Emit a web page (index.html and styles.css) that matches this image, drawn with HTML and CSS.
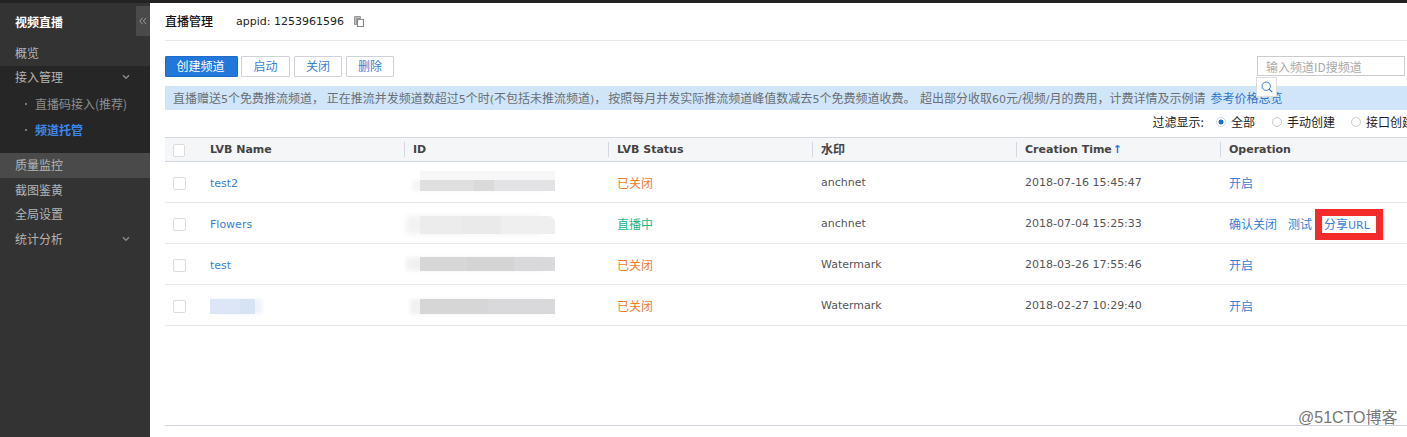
FILE: index.html
```html
<!DOCTYPE html>
<html lang="zh">
<head>
<meta charset="utf-8">
<title>直播管理</title>
<link rel="stylesheet" href="styles.css">
</head>
<body>
<div class="topstrip"></div>
<div class="app">
  <aside class="side">
    <div class="side-title">视频直播</div>
    <button class="collapse" aria-label="收起">
      <svg width="8" height="8" viewBox="0 0 8 8"><path d="M3.6 .8 .8 4l2.8 3.2M7.2 .8 4.4 4l2.8 3.2" fill="none" stroke="#9a9a9a" stroke-width="1"/></svg>
    </button>
    <div class="nav-item">概览</div>
    <div class="nav-group">
      <div class="nav-item nav-head">接入管理
        <svg class="chev" width="8" height="6" viewBox="0 0 8 6"><path d="M1 1.2 4 4.2l3-3" fill="none" stroke="#8a8a8a" stroke-width="1.4"/></svg>
      </div>
      <div class="sub-item">直播码接入(推荐)</div>
      <div class="sub-item sub-active">频道托管</div>
    </div>
    <div class="nav-item nav-active">质量监控</div>
    <div class="nav-item">截图鉴黄</div>
    <div class="nav-item">全局设置</div>
    <div class="nav-item">统计分析
      <svg class="chev" width="8" height="6" viewBox="0 0 8 6"><path d="M1 1.2 4 4.2l3-3" fill="none" stroke="#8a8a8a" stroke-width="1.4"/></svg>
    </div>
  </aside>
  <main class="main">
    <header class="page-head">
      <span class="page-title">直播管理</span>
      <span class="appid">appid: 1253961596</span>
      <svg class="copy" width="10" height="11" viewBox="0 0 10 11"><path d="M.5.5h6v2h-4v6h-2z" fill="#bbb" stroke="#999" stroke-width="1"/><path d="M3.5 3.5h6v7h-6z" fill="#fff" stroke="#888" stroke-width="1.2"/></svg>
    </header>
    <div class="toolbar">
      <button class="btn btn-primary">创建频道</button>
      <button class="btn btn-start">启动</button>
      <button class="btn">关闭</button>
      <button class="btn">删除</button>
      <div class="search">
        <input class="search-input" placeholder="输入频道ID搜频道">
        <button class="search-btn" aria-label="搜索">
          <svg width="12" height="12" viewBox="0 0 12 12"><circle cx="5.2" cy="5.2" r="4.2" fill="none" stroke="#3a7fd5" stroke-width="1"/><path d="m8.2 8.2 3 3" stroke="#3a7fd5" stroke-width="1.2"/></svg>
        </button>
      </div>
    </div>
    <div class="notice">直播赠送<span class="latin">5</span>个免费推流频道， 正在推流并发频道数超过<span class="latin">5</span>个时<span class="latin">(</span>不包括未推流频道<span class="latin">)</span>，<span class="gap"></span>按照每月并发实际推流频道峰值数减去<span class="latin">5</span>个免费频道收费。 <span class="gap"></span>超出部分收取<span class="latin">60</span>元<span class="latin">/</span>视频<span class="latin">/</span>月的费用，计费详情及示例请<a class="notice-link">参考价格总览</a></div>
    <div class="filter">
      <span class="filter-label">过滤显示:</span>
      <label class="radio-item"><i class="radio radio-on"></i>全部</label>
      <label class="radio-item"><i class="radio"></i>手动创建</label>
      <label class="radio-item"><i class="radio"></i>接口创建</label>
    </div>
    <table class="grid">
      <colgroup>
        <col class="c-check"><col class="c-name"><col class="c-w"><col class="c-w"><col class="c-w"><col class="c-w"><col class="c-op">
      </colgroup>
      <thead>
        <tr>
          <th><i class="check check-head"></i></th>
          <th class="first">LVB Name</th>
          <th>ID</th>
          <th>LVB Status</th>
          <th class="cjk-head">水印</th>
          <th>Creation Time<span class="sort">↑</span></th>
          <th>Operation</th>
        </tr>
      </thead>
      <tbody>
        <tr>
          <td><i class="check"></i></td>
          <td><a class="link latin">test2</a></td>
          <td><div class="mask mask-a"></div></td>
          <td class="st-off">已关闭</td>
          <td class="latin">anchnet</td>
          <td class="latin">2018-07-16 15:45:47</td>
          <td><a class="link">开启</a></td>
        </tr>
        <tr>
          <td><i class="check"></i></td>
          <td><a class="link latin">Flowers</a></td>
          <td><div class="mask mask-b"></div></td>
          <td class="st-on">直播中</td>
          <td class="latin">anchnet</td>
          <td class="latin">2018-07-04 15:25:33</td>
          <td><div class="ops"><a class="link">确认关闭</a><a class="link">测试</a><a class="link share">分享<span class="latin">URL</span></a></div></td>
        </tr>
        <tr>
          <td><i class="check"></i></td>
          <td><a class="link latin">test</a></td>
          <td><div class="mask mask-c"></div></td>
          <td class="st-off">已关闭</td>
          <td class="latin">Watermark</td>
          <td class="latin">2018-03-26 17:55:46</td>
          <td><a class="link">开启</a></td>
        </tr>
        <tr>
          <td><i class="check"></i></td>
          <td><div class="mask-name"></div></td>
          <td><div class="mask mask-d"></div></td>
          <td class="st-off">已关闭</td>
          <td class="latin">Watermark</td>
          <td class="latin">2018-02-27 10:29:40</td>
          <td><a class="link">开启</a></td>
        </tr>
      </tbody>
    </table>
    <div class="foot-line"></div>
  </main>
</div>
<div class="stamp">@51CTO博客</div>
</body>
</html>
```
FILE: styles.css
```css
* { box-sizing: border-box; }
html, body { margin: 0; padding: 0; height: 100%; overflow: hidden; background: #fff; }
body { font: 12px/1.2 "Noto Sans CJK SC", "Noto Sans", sans-serif; color: #333; position: relative; }
.latin { font-family: "DejaVu Sans", "Noto Sans CJK SC", sans-serif; font-size: 11px; }

.topstrip { height: 3px; background: #222; }
.app { display: flex; height: 434px; }

.side { width: 150px; flex: none; background: #333; color: #b4b4b4; position: relative; }
.side-title { height: 38px; padding: 0 15px; display: flex; align-items: center; color: #fff; font-weight: 700; }
.collapse { position: absolute; left: 136px; top: 3px; width: 14px; height: 30px; padding: 0; border: 0; background: #4a4a4a; display: flex; align-items: center; justify-content: center; }
.nav-item { height: 24.6px; padding: 0 15px; display: flex; align-items: center; justify-content: space-between; }
.nav-group { background: #262626; height: 87px; }
.nav-head { height: 25.6px; padding-bottom: 2px; }
.nav-active { background: #4a4a4a; height: 25px; }
.sub-item { height: 26px; padding-left: 35px; display: flex; align-items: center; position: relative; color: #8d8d8d; }
.sub-item::before { content: ""; position: absolute; left: 25px; top: 12px; width: 2px; height: 2px; background: #777; }
.sub-active { color: #3c86f0; font-weight: 700; }
.chev { margin-right: 5px; }

.main { flex: 1; min-width: 0; overflow: hidden; padding-left: 15px; }
.page-head { height: 38px; display: flex; align-items: center; border-bottom: 1px solid #e8e8e8; color: #111; }
.page-title { font-weight: 500; }
.appid { font-family: "DejaVu Sans", sans-serif; font-size: 11px; margin-left: 23px; color: #222; }
.copy { margin-left: 10px; }

.toolbar { display: flex; gap: 4px; margin-top: 15px; height: 21px; padding-right: 2px; }
.btn { width: 48px; height: 21px; padding: 0; border: 1px solid #cfd2d6; border-radius: 1px; background: #fff; color: #3a7fd5; font: inherit; }
.btn-primary { width: 73px; padding-right: 2px; background: #2277da; border-color: #1f6cc6; color: #fff; }
.btn-start { width: 49px; margin-left: -1px; }
.search { margin-left: auto; width: 148px; position: relative; }
.search-input { display: block; width: 100%; height: 20px; padding: 0 8px; border: 1px solid #ccc; background: #fff; font: inherit; outline: 0; }
.search-input::placeholder { color: #aaa; }
.search-btn { position: absolute; left: -1px; top: 21px; width: 21px; height: 20px; padding: 0; border: 1px solid #ddd; background: #fff; display: flex; align-items: center; justify-content: center; z-index: 1; }

.notice { height: 24px; margin-top: 9px; padding-left: 8px; line-height: 24px; background: #d0e5f7; color: #6a6f76; white-space: nowrap; }
.gap { display: inline-block; width: 2px; }
.notice-link { margin-left: 5px; color: #2f74c8; }

.filter { height: 27px; margin-right: -7px; padding-bottom: 3px; display: flex; align-items: center; justify-content: flex-end; color: #222; white-space: nowrap; }
.filter-label { margin-right: 7px; }
.radio-item { display: flex; align-items: center; margin-left: 5px; }
.radio-item + .radio-item { margin-left: 17px; }
.radio-item:last-child { margin-left: 16px; }
.radio { width: 10px; height: 10px; margin-right: 5px; border: 1px solid #ccc; border-radius: 50%; background: #fff; }
.radio-on { border-color: #cfd8e0; background: radial-gradient(circle, #1b6fd0 0 2.2px, #fff 2.8px); }

.grid { width: 1242px; table-layout: fixed; border-collapse: collapse; }
.c-check { width: 37px; }
.c-name { width: 202px; }
.c-w { width: 204px; }
.c-op { width: 187px; }
.grid th { height: 24px; padding: 0 0 1px 9px; position: relative; text-align: left; background: #f5f6f8; border-top: 1px solid #d3d7e0; border-bottom: 1px solid #d3d7e0; font: 700 11px "DejaVu Sans", "Noto Sans CJK SC", sans-serif; color: #444; white-space: nowrap; }
.grid th:nth-child(-n+2) { padding-left: 8px; }
.grid th + th + th::before { content: ""; position: absolute; left: 0; top: 4px; width: 1px; height: 15px; background: #d3d7e0; }
.grid th.cjk-head { font-size: 12px; padding-bottom: 3px; }
.sort { color: #2277da; margin-left: 1px; }
.grid td { height: 41px; padding: 2px 0 0 9px; border-bottom: 1px solid #e5e8ee; color: #555; white-space: nowrap; }
.grid td:nth-child(-n+2) { padding-left: 8px; }
.check { display: block; width: 13px; height: 13px; border: 1px solid #dcdcdc; border-radius: 2px; background: #fff; }
.check-head { width: 12px; margin-top: 2px; }
.link { color: #3a7fd5; }
.grid td.st-off { color: #ef7a2a; }
.grid td.st-on { color: #14b98a; }
.ops { display: flex; align-items: center; }
.ops .link + .link { margin-left: 11px; }
.ops .link.share { width: 68px; height: 31px; margin-left: 3px; padding-left: 2px; border: 7px solid #f52a2a; background: #fff; line-height: 15px; }

.mask { width: 135px; margin-left: 7px; }
.mask-a { height: 11px; margin-top: 5px; background: linear-gradient(90deg, #dfdfe0 0 40%, #dadada 40% 55%, #e3e3e5 55%); box-shadow: 0 -9px 0 #f7f7f7, -8px 0 4px #f5f5f5; }
.mask-b { height: 18px; margin-top: 1px; background: linear-gradient(90deg, #ececec 0 30%, #eaeaea 30% 60%, #efefef 60%); box-shadow: -14px 0 6px #f2f2f2; border-radius: 0 6px 0 0; }
.mask-c { height: 14px; margin-top: -3px; background: linear-gradient(90deg, #d7d7d8 0 35%, #d4d4d5 35% 70%, #d9d9dc 70%); box-shadow: -14px 0 4px #f1f1f1; }
.mask-d { height: 15px; margin-top: 1px; background: linear-gradient(90deg, #d6d6d6 0 50%, #d9d9dc 50%); box-shadow: -10px 0 4px #f1f1f1; }
.mask-name { width: 45px; height: 15px; margin-top: 1px; background: linear-gradient(90deg, #dce6f6 0 66%, #d6e3f5 66%); box-shadow: 7px 0 4px #edf2fb; }

.foot-line { height: 1px; margin-top: 99px; background: #d3d3e0; }

.stamp { position: absolute; left: 1298px; top: 408px; font: 16px/20px "Liberation Sans", "Noto Sans CJK SC", sans-serif; color: #777; text-shadow: 0 0 2px #fff; }
```
